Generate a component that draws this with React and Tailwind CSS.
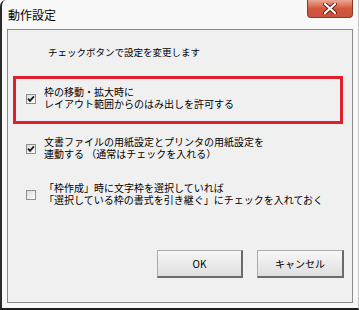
import React from "react";

const FONT = { fontFamily: '"Noto Sans CJK JP", "Noto Sans", sans-serif' };

function Check({ checked }) {
  return (
    <div className="w-[10px] h-[10px] shrink-0 border border-[#8f8f8f] bg-gradient-to-br from-[#dcdcdc] to-[#ffffff] flex items-center justify-center">
      {checked && (
        <svg width="8" height="8" viewBox="0 0 8 8">
          <path d="M1 3.6 L3 5.8 L7 1.4" fill="none" stroke="#1a1a1a" strokeWidth="1.8" />
        </svg>
      )}
    </div>
  );
}

function Option({ checked, lines, className = "" }) {
  return (
    <div className={`flex items-start gap-[8px] ${className}`}>
      <div className="mt-[8px]">
        <Check checked={checked} />
      </div>
      <div className="text-[10px] leading-[12px] text-black">
        {lines.map((l) => (
          <div key={l} className="whitespace-nowrap">{l}</div>
        ))}
      </div>
    </div>
  );
}

function Btn({ children, w }) {
  return (
    <button
      className={`${w} h-[28px] border border-[#acacac] border-r-2 border-b-2 border-r-[#6a6a6a] border-b-[#6a6a6a] bg-gradient-to-b from-[#f7f7f7] to-[#dfdfdf] text-[10px] text-black flex items-center justify-center`}
    >
      {children}
    </button>
  );
}

export default function App() {
  return (
    <div style={FONT} className="w-[359px] h-[310px] overflow-hidden">
      <div className="w-[359px] h-[310px] bg-[#f8f8f8] border-l-2 border-l-[#2a2a2a] border-b-2 border-b-[#1e1e1e] border-r border-r-[#c4c4c4] rounded-tl-[6px] flex flex-col">
        <div className="h-[29px] shrink-0 flex items-start justify-between">
          <div className="pl-[6px] pt-[8px] text-[12px] leading-[14px] text-black">動作設定</div>
          <div className="mr-[5px] w-[46px] h-[18px] rounded-b-[4px] border border-[#8a3a2a] border-t-0 bg-gradient-to-b from-[#eaa896] via-[#d4573e] to-[#c65440] flex items-center justify-center">
            <svg width="14" height="11" viewBox="0 0 14 11">
              <path d="M2 1 L12 10 M12 1 L2 10" stroke="#5a2018" strokeWidth="4" strokeLinecap="round" />
              <path d="M2 1 L12 10 M12 1 L2 10" stroke="#ffffff" strokeWidth="2.2" strokeLinecap="round" />
            </svg>
          </div>
        </div>
        <div className="ml-[5px] w-[346px] h-[274px] shrink-0 bg-[#f0f0f0] border border-[#8a8a8a] flex flex-col">
          <div className="pt-[16px] pl-[40px] text-[9.5px] leading-[12px] text-black">チェックボタンで設定を変更します</div>
          <div className="mt-[18px] ml-[5px] w-[330px] h-[48px] border-[3px] border-[#e0202c] pl-[10px]">
            <Option checked lines={["枠の移動・拡大時に", "レイアウト範囲からのはみ出しを許可する"]} className="mt-[7px]" />
          </div>
          <Option
            checked
            lines={["文書ファイルの用紙設定とプリンタの用紙設定を", "連動する （通常はチェックを入れる）"]}
            className="mt-[12px] ml-[18px]"
          />
          <Option
            lines={["「枠作成」時に文字枠を選択していれば", "「選択している枠の書式を引き継ぐ」にチェックを入れておく"]}
            className="mt-[22px] ml-[18px]"
          />
          <div className="mt-[44px] pr-[8px] flex justify-end gap-[14px]">
            <Btn w="w-[86px]">OK</Btn>
            <Btn w="w-[87px]">キャンセル</Btn>
          </div>
        </div>
      </div>
    </div>
  );
}
